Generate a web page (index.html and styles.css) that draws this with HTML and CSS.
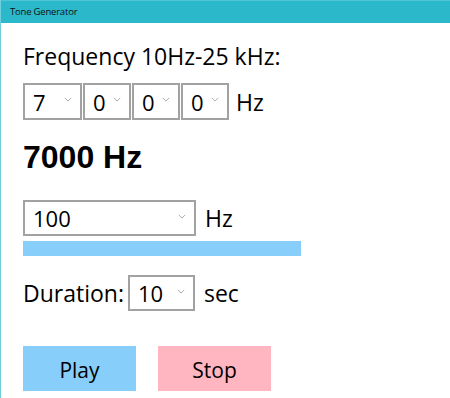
FILE: index.html
```html
<!DOCTYPE html>
<html lang="en">

<head>
    <meta charset="UTF-8" />
    <meta name="viewport" content="width=device-width, initial-scale=1" />
    <title>Tone Generator</title>
    <link rel="stylesheet" href="styles.css">
</head>

<body>
    <div class="window">
        <div class="titlebar">Tone Generator</div>
        <div class="content">
            <div class="label">Frequency 10Hz-25 kHz:</div>

            <div class="row digits">
                <div class="select first"><span>7</span><svg class="chev" viewBox="0 0 10 6"><path d="M1 1 L5 5 L9 1" /></svg></div>
                <div class="select"><span>0</span><svg class="chev" viewBox="0 0 10 6"><path d="M1 1 L5 5 L9 1" /></svg></div>
                <div class="select"><span>0</span><svg class="chev" viewBox="0 0 10 6"><path d="M1 1 L5 5 L9 1" /></svg></div>
                <div class="select"><span>0</span><svg class="chev" viewBox="0 0 10 6"><path d="M1 1 L5 5 L9 1" /></svg></div>
                <span class="unit">Hz</span>
            </div>

            <div class="total">7000 Hz</div>

            <div class="row step">
                <div class="select wide"><span>100</span><svg class="chev" viewBox="0 0 10 6"><path d="M1 1 L5 5 L9 1" /></svg></div>
                <span class="unit">Hz</span>
            </div>
            <div class="bar"></div>

            <div class="row duration">
                <span class="label">Duration:</span>
                <div class="select dur"><span>10</span><svg class="chev" viewBox="0 0 10 6"><path d="M1 1 L5 5 L9 1" /></svg></div>
                <span class="unit">sec</span>
            </div>

            <div class="actions">
                <button class="play">Play</button>
                <button class="stop">Stop</button>
            </div>
        </div>
    </div>
</body>

</html>
```

FILE: styles.css
```css
body {
    margin: 0;
    font-family: "Open Sans", "Noto Sans", sans-serif;
    color: #000;
    background: #fff;
}

.window {
    height: 398px;
    border-left: 1px solid #6fcfdc;
    box-sizing: border-box;
}

.titlebar {
    height: 23px;
    background: #2bb8cb;
    border-top: 1px solid #4fc4d4;
    box-sizing: border-box;
    font-size: 9.5px;
    letter-spacing: -0.2px;
    line-height: 21px;
    padding-left: 9px;
    color: #111;
}

.content {
    padding: 18px 0 0 22px;
}

.label {
    font-size: 23px;
    line-height: 30px;
}

.row {
    display: flex;
    align-items: center;
}

.digits {
    margin-top: 12px;
}

.digits .unit {
    margin-left: 6px;
}

.select {
    height: 37px;
    width: 48px;
    border: 2px solid #a2a2a2;
    box-sizing: border-box;
    display: flex;
    align-items: center;
    justify-content: space-between;
    padding: 0 8px 0 8px;
    font-size: 22px;
    margin-right: 1px;
}

.select.first {
    width: 59px;
}

.select span {
    line-height: 1;
}

.chev {
    width: 8px;
    height: 5px;
    fill: none;
    stroke: #a8a8a8;
    stroke-width: 1.2;
    margin-bottom: 4px;
}

.unit {
    font-size: 23px;
    margin-left: 8px;
}

.total {
    font-family: "Liberation Sans", Arial, sans-serif;
    font-weight: bold;
    font-size: 32px;
    line-height: 36px;
    margin-top: 19px;
}

.step {
    margin-top: 25px;
}

.select.wide {
    width: 173px;
    height: 36px;
}

.bar {
    width: 278px;
    height: 15px;
    background: #87cefa;
    margin-top: 5px;
}

.duration {
    margin-top: 19px;
}

.duration .label {
    margin-right: 4px;
}

.select.dur {
    width: 67px;
    height: 36px;
}

.actions {
    display: flex;
    gap: 22px;
    margin-top: 35px;
}

button {
    width: 113px;
    height: 45px;
    border: none;
    font-family: inherit;
    font-size: 21px;
    color: #000;
    padding: 3px 0 0;
}

.play {
    background: #87cefa;
}

.stop {
    background: #ffb6c1;
}
```
